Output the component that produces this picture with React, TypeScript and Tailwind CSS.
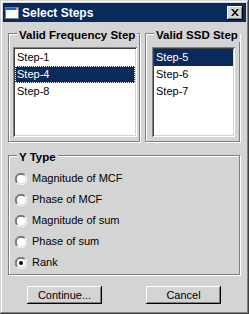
import React from "react";

const NAVY = "bg-[#0a2a5c]";

const TitleIcon = () => (
  <svg width="14" height="12" viewBox="0 0 14 12">
    <rect x="0.5" y="0.5" width="13" height="11" fill="#fff" stroke="#808080" />
    <rect x="1" y="1" width="12" height="2" fill="#1c5fd0" />
    <rect x="11" y="1" width="2" height="2" fill="#e8a040" />
  </svg>
);

const CloseButton = () => (
  <div className="w-[16px] h-[14px] bg-[#d4d4d4] flex items-center justify-center shadow-[inset_-1px_-1px_0_#000,inset_1px_1px_0_#fff,inset_-2px_-2px_0_#808080]">
    <svg width="8" height="7" viewBox="0 0 8 7">
      <path d="M0 0 L2 0 L4 2.5 L6 0 L8 0 L5 3.5 L8 7 L6 7 L4 4.5 L2 7 L0 7 L3 3.5 Z" fill="#000" />
    </svg>
  </div>
);

const Radio = ({ checked }: { checked?: boolean }) => (
  <svg width="12" height="12" viewBox="0 0 12 12">
    <circle cx="6" cy="6" r="5.5" fill="#fff" />
    <path d="M10.2 1.8 A5.5 5.5 0 0 0 1.8 10.2" stroke="#808080" strokeWidth="1" fill="none" />
    <path d="M1.8 10.2 A5.5 5.5 0 0 0 10.2 1.8" stroke="#fff" strokeWidth="1" fill="none" />
    <path d="M9.5 2.5 A4.5 4.5 0 0 0 2.5 9.5" stroke="#404040" strokeWidth="1" fill="none" />
    <path d="M2.5 9.5 A4.5 4.5 0 0 0 9.5 2.5" stroke="#d4d4d4" strokeWidth="1" fill="none" />
    {checked && <circle cx="6" cy="6" r="2" fill="#000" />}
  </svg>
);

const Group = ({
  title,
  className,
  children,
}: {
  title: string;
  className: string;
  children: React.ReactNode;
}) => (
  <div
    className={`relative border border-[#808080] shadow-[inset_1px_1px_0_#fff,1px_1px_0_#fff] ${className}`}
  >
    <span className="absolute top-[-6px] left-[8px] px-[2px] h-[14px] leading-[14px] whitespace-nowrap bg-[#d4d4d4] text-[11.5px] font-bold text-black">
      {title}
    </span>
    {children}
  </div>
);

const ListBox = ({
  items,
  selected,
  focused,
  className,
}: {
  items: string[];
  selected: string;
  focused?: boolean;
  className: string;
}) => (
  <div
    className={`bg-white p-[2px] shadow-[inset_1px_1px_0_#808080,inset_-1px_-1px_0_#fff,inset_2px_2px_0_#404040,inset_-2px_-2px_0_#d4d4d4] ${className}`}
  >
    {items.map((item) =>
      item === selected ? (
        <div
          key={item}
          className={`h-[17px] leading-[17px] pl-[2px] ${NAVY} text-white ${
            focused ? "outline-1 outline-dotted outline-white -outline-offset-1" : ""
          }`}
        >
          {item}
        </div>
      ) : (
        <div key={item} className="h-[17px] leading-[17px] pl-[2px] text-black">
          {item}
        </div>
      )
    )}
  </div>
);

export default function App() {
  const yTypes = [
    "Magnitude of MCF",
    "Phase of MCF",
    "Magnitude of sum",
    "Phase of sum",
    "Rank",
  ];

  return (
    <div className="w-[249px] h-[314px] bg-[#d4d4d4] p-[3px] flex flex-col font-['Liberation_Sans',Arial,sans-serif] text-[11px] text-black shadow-[inset_-1px_-1px_0_#404040,inset_1px_1px_0_#d4d4d4,inset_-2px_-2px_0_#808080,inset_2px_2px_0_#fff]">
      <div className={`h-[19px] ${NAVY} flex items-center pl-[2px] pr-[3px]`}>
        <TitleIcon />
        <span className="ml-[3px] text-white font-bold text-[12px]">Select Steps</span>
        <div className="ml-auto">
          <CloseButton />
        </div>
      </div>

      <div className="flex mt-[11px] ml-[5px]">
        <Group title="Valid Frequency Step" className="w-[132px] h-[109px]">
          <ListBox
            items={["Step-1", "Step-4", "Step-8"]}
            selected="Step-4"
            focused
            className="w-[124px] h-[90px] mt-[13px] ml-[4px]"
          />
        </Group>
        <Group title="Valid SSD Step" className="w-[95px] h-[109px] ml-[5px]">
          <ListBox
            items={["Step-5", "Step-6", "Step-7"]}
            selected="Step-5"
            className="w-[83px] h-[90px] mt-[13px] ml-[6px]"
          />
        </Group>
      </div>

      <Group title="Y Type" className="w-[232px] h-[120px] mt-[13px] ml-[5px]">
        <div className="mt-[12px] flex flex-col">
          {yTypes.map((t) => (
            <div key={t} className="h-[21px] flex items-center pl-[6px]">
              <Radio checked={t === "Rank"} />
              <span className="ml-[5px]">{t}</span>
            </div>
          ))}
        </div>
      </Group>

      <div className="flex mt-[11px] ml-[24px] gap-[44px]">
        {["Continue...", "Cancel"].map((b) => (
          <div
            key={b}
            className="w-[75px] h-[18px] flex items-center justify-center bg-[#d4d4d4] shadow-[inset_-1px_-1px_0_#000,inset_1px_1px_0_#fff,inset_-2px_-2px_0_#808080]"
          >
            {b}
          </div>
        ))}
      </div>
    </div>
  );
}
